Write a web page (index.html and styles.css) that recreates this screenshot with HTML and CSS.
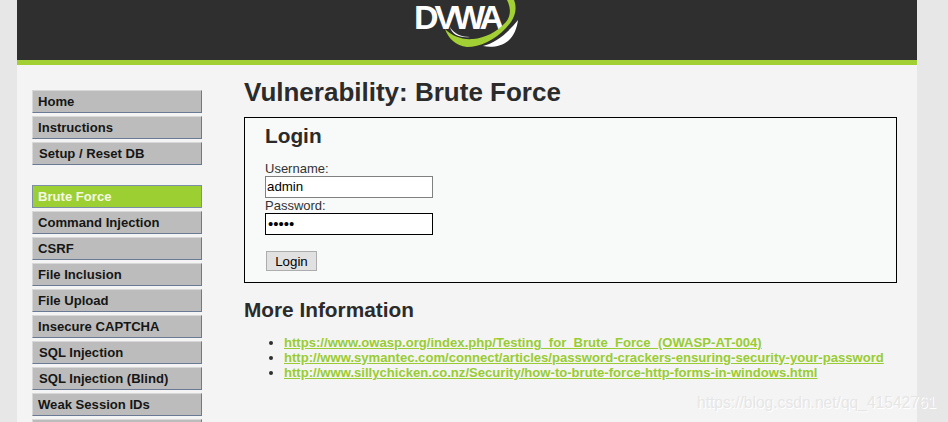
FILE: index.html
```html
<!DOCTYPE html>
<html lang="en">
<head>
    <meta charset="UTF-8">
    <title>Vulnerability: Brute Force</title>
    <link rel="stylesheet" href="styles.css">
</head>
<body>
    <div class="container">
        <div class="header">
            <div class="logo">
                <span class="logo-text">DVWA</span>
                <svg class="logo-swoosh" width="85" height="50" viewBox="0 0 85 50">
                    <path d="M5 29 C8 38 16 46 27 47 C40 47 55 40 66 28 C74 20 78 10 74 0 L67 0 C71 8 71 16 66 22 C57 32 45 38 33 39 C22 40 12 36 5 29 Z" fill="#a2cf33"/>
                    <path d="M10 27 C14 34 22 37 30 37 C20 38 12 35 10 27 Z" fill="#ffffff"/>
                    <path d="M43 46 C55 43 68 33 78 20 C77 28 74 36 68 41 C62 46 52 48 43 46 Z" fill="#ffffff"/>
                </svg>
            </div>
        </div>

        <div class="content">
            <div class="sidebar">
                <ul class="menu">
                    <li><a href="#">Home</a></li>
                    <li><a href="#">Instructions</a></li>
                    <li><a href="#" class="shift">Setup / Reset DB</a></li>
                </ul>
                <ul class="menu">
                    <li class="selected"><a href="#">Brute Force</a></li>
                    <li><a href="#">Command Injection</a></li>
                    <li><a href="#">CSRF</a></li>
                    <li><a href="#">File Inclusion</a></li>
                    <li><a href="#">File Upload</a></li>
                    <li><a href="#">Insecure CAPTCHA</a></li>
                    <li><a href="#" class="shift">SQL Injection</a></li>
                    <li><a href="#" class="shift">SQL Injection (Blind)</a></li>
                    <li><a href="#">Weak Session IDs</a></li>
                    <li></li>
                </ul>
            </div>

            <div class="main">
                <h1>Vulnerability: Brute Force</h1>

                <div class="login-box">
                    <h2>Login</h2>
                    <form class="login-form">
                        <label for="username">Username:</label>
                        <input type="text" id="username" value="admin">
                        <label for="password">Password:</label>
                        <input type="password" id="password" class="focused" value="admin">
                        <button type="button">Login</button>
                    </form>
                </div>

                <h2 class="more-title">More Information</h2>
                <ul class="links">
                    <li><a href="#">https://www.owasp.org/index.php/Testing_for_Brute_Force_(OWASP-AT-004)</a></li>
                    <li><a href="#">http://www.symantec.com/connect/articles/password-crackers-ensuring-security-your-password</a></li>
                    <li><a href="#">http://www.sillychicken.co.nz/Security/how-to-brute-force-http-forms-in-windows.html</a></li>
                </ul>
            </div>
        </div>
    </div>

    <div class="watermark">https://blog.csdn.net/qq_41542761</div>
</body>
</html>
```

FILE: styles.css
```css
html, body {
    height: 100%;
    overflow: hidden;
}

body {
    margin: 0;
    background-color: #e7e7e7;
    font-family: "Liberation Sans", Arial, sans-serif;
    font-size: 14px;
    color: #2f2f2f;
}

.container {
    width: 900px;
    height: 422px;
    margin-left: 17px;
    background-color: #f4f4f4;
    overflow: hidden;
}

.header {
    display: flex;
    justify-content: center;
    height: 60px;
    background-color: #2f2f2f;
    border-bottom: 5px solid #a2cf33;
}

.logo {
    position: relative;
    width: 106px;
    height: 60px;
}

.logo-text {
    position: absolute;
    left: 0;
    top: 0;
    font-size: 34px;
    line-height: 34px;
    font-weight: bold;
    letter-spacing: -4px;
    color: #ffffff;
}

.logo-swoosh {
    position: absolute;
    left: 26px;
    top: 0;
}

.content {
    display: flex;
    padding-top: 14px;
}

/* левая колонка */
.sidebar {
    width: 170px;
    margin-left: 15px;
    margin-right: 42px;
    padding-top: 11px;
    flex-shrink: 0;
}

.menu {
    list-style: none;
    margin: 0 0 20px;
    padding: 0;
}

.menu li {
    box-sizing: border-box;
    width: 170px;
    height: 23px;
    margin-bottom: 3px;
    background-color: #bcbcbc;
    border-top: 1px solid #d8d8d8;
    border-left: 1px solid #d8d8d8;
    border-bottom: 1px solid #6b7a94;
    border-right: 1px solid #6b7a94;
}

.menu a {
    display: block;
    padding-left: 5px;
    font-size: 13.1px;
    line-height: 21px;
    font-weight: bold;
    color: #161616;
    text-decoration: none;
}

.menu a.shift {
    padding-left: 6px;
}

.menu li.selected {
    background-color: #9ccf31;
    border-color: #7b8fa8;
}

.menu li.selected a {
    color: #f4f8e4;
}

/* правая колонка */
.main {
    width: 653px;
}

h1 {
    margin: 0 0 11px;
    font-size: 26px;
    line-height: 27px;
    font-weight: bold;
    color: #2b2b2b;
}

.login-box {
    box-sizing: border-box;
    height: 166px;
    padding: 7px 20px 0;
    border: 1px solid #000000;
    background-color: #f8f9f9;
}

h2 {
    margin: 0;
    font-size: 20.8px;
    line-height: 22px;
    font-weight: bold;
    color: #2b2b2b;
}

.login-form {
    display: flex;
    flex-direction: column;
    align-items: flex-start;
    margin-top: 14px;
}

.login-form label {
    font-size: 13px;
    line-height: 15px;
    height: 15px;
    color: #333333;
}

.login-form input {
    box-sizing: border-box;
    width: 168px;
    height: 22px;
    padding: 0 1px 2px;
    border: 1px solid #808080;
    background-color: #ffffff;
    font-family: "Liberation Sans", Arial, sans-serif;
    font-size: 13.3px;
    color: #000000;
}

.login-form input.focused {
    padding: 0 2px 1px;
    border-color: #000000;
    font-size: 15px;
}

.login-form button {
    box-sizing: border-box;
    width: 51px;
    height: 20px;
    margin: 16px 0 0 1px;
    padding: 0;
    border: 1px solid #adadad;
    background-color: #e1e1e1;
    font-family: "Liberation Sans", Arial, sans-serif;
    font-size: 13.3px;
    color: #000000;
}

.more-title {
    margin-top: 16px;
}

.links {
    margin: 14px 0 0;
    padding-left: 40px;
}

.links li {
    line-height: 15px;
    font-size: 13.1px;
    color: #2f2f2f;
}

.links a {
    font-weight: bold;
    color: #99cc33;
}

.watermark {
    position: absolute;
    left: 697px;
    top: 393px;
    font-size: 15.6px;
    line-height: 20px;
    color: #e6e6e6;
    text-shadow: 1px 1px 0 #ffffff;
}
```
